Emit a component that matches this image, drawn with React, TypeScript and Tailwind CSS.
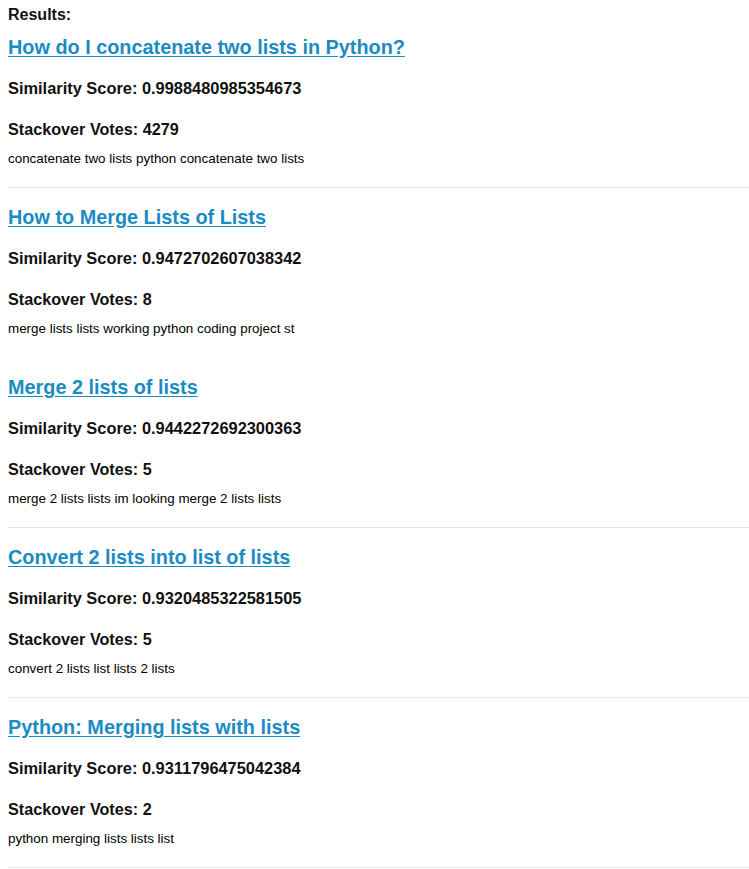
import React from "react";

const items = [
  {
    title: "How do I concatenate two lists in Python?",
    score: "0.9988480985354673",
    votes: "4279",
    text: "concatenate two lists python concatenate two lists",
    hr: true,
  },
  {
    title: "How to Merge Lists of Lists",
    score: "0.9472702607038342",
    votes: "8",
    text: "merge lists lists working python coding project st",
    hr: false,
  },
  {
    title: "Merge 2 lists of lists",
    score: "0.9442272692300363",
    votes: "5",
    text: "merge 2 lists lists im looking merge 2 lists lists",
    hr: true,
  },
  {
    title: "Convert 2 lists into list of lists",
    score: "0.9320485322581505",
    votes: "5",
    text: "convert 2 lists list lists 2 lists",
    hr: true,
  },
  {
    title: "Python: Merging lists with lists",
    score: "0.9311796475042384",
    votes: "2",
    text: "python merging lists lists list",
    hr: true,
  },
];

export default function App() {
  return (
    <div
      className="min-h-screen bg-white pl-2 pt-[5px] text-[#111]"
      style={{ fontFamily: '"Liberation Sans", Arial, sans-serif' }}
    >
      <div className="text-[16px] font-bold leading-[20px]">Results:</div>
      <div className="mt-[10px]">
        {items.map((it, i) => (
          <div key={i}>
            <a
              href="#"
              className="block w-fit text-[19.85px] font-bold leading-[24px] text-[#1b8bc3] underline underline-offset-[2px]"
            >
              {it.title}
            </a>
            <div className="mt-[19px] text-[16.4px] font-bold leading-[20px]">
              Similarity Score: {it.score}
            </div>
            <div className="mt-[21px] text-[16.2px] font-bold leading-[20px]">
              Stackover Votes: {it.votes}
            </div>
            <div className="mt-[12px] text-[13.4px] leading-[16px] text-black">{it.text}</div>
            <div
              className={`mt-[20px] mb-[17px] h-px ${it.hr ? "bg-[#e6e6e6]" : "bg-transparent"}`}
            />
          </div>
        ))}
      </div>
    </div>
  );
}
